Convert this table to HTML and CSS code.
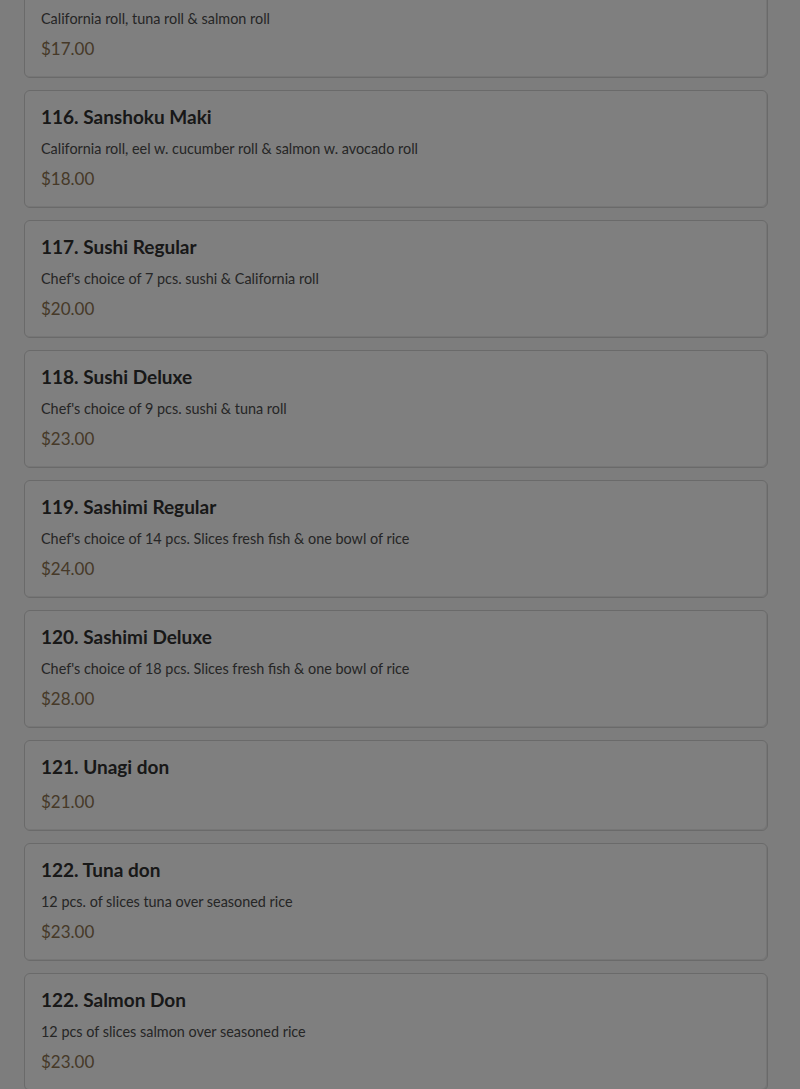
FILE: index.html
```html
<!DOCTYPE html>
<html lang="en">
<head>
<meta charset="utf-8">
<title>Menu</title>
<link rel="stylesheet" href="styles.css">
</head>
<body>
<main class="menu">
  <section class="item">
    <h3 class="item-title">115. Maki Combo</h3>
    <p class="item-desc">California roll, tuna roll &amp; salmon roll</p>
    <div class="item-price">$17.00</div>
  </section>
  <section class="item">
    <h3 class="item-title">116. Sanshoku Maki</h3>
    <p class="item-desc">California roll, eel w. cucumber roll &amp; salmon w. avocado roll</p>
    <div class="item-price">$18.00</div>
  </section>
  <section class="item">
    <h3 class="item-title">117. Sushi Regular</h3>
    <p class="item-desc">Chef's choice of 7 pcs. sushi &amp; California roll</p>
    <div class="item-price">$20.00</div>
  </section>
  <section class="item">
    <h3 class="item-title">118. Sushi Deluxe</h3>
    <p class="item-desc">Chef's choice of 9 pcs. sushi &amp; tuna roll</p>
    <div class="item-price">$23.00</div>
  </section>
  <section class="item">
    <h3 class="item-title">119. Sashimi Regular</h3>
    <p class="item-desc">Chef's choice of 14 pcs. Slices fresh fish &amp; one bowl of rice</p>
    <div class="item-price">$24.00</div>
  </section>
  <section class="item">
    <h3 class="item-title">120. Sashimi Deluxe</h3>
    <p class="item-desc">Chef's choice of 18 pcs. Slices fresh fish &amp; one bowl of rice</p>
    <div class="item-price">$28.00</div>
  </section>
  <section class="item">
    <h3 class="item-title">121. Unagi don</h3>
    <div class="item-price">$21.00</div>
  </section>
  <section class="item">
    <h3 class="item-title">122. Tuna don</h3>
    <p class="item-desc">12 pcs. of slices tuna over seasoned rice</p>
    <div class="item-price">$23.00</div>
  </section>
  <section class="item">
    <h3 class="item-title">122. Salmon Don</h3>
    <p class="item-desc">12 pcs of slices salmon over seasoned rice</p>
    <div class="item-price">$23.00</div>
  </section>
</main>
<div class="backdrop"></div>
</body>
</html>
```
FILE: styles.css
```css
html, body {
  margin: 0;
  padding: 0;
  background: #fafafa;
  height: 100%;
  overflow: hidden;
}
body {
  font-family: Lato, "Noto Sans", sans-serif;
  color: #333;
}
.menu {
  display: flex;
  flex-direction: column;
  gap: 12px;
  padding: 0 32px 0 24px;
  margin-top: -40px;
}
.item {
  background: #fefefe;
  border: 1px solid #d4d4d4;
  border-radius: 6px;
  padding: 16px;
  display: flex;
  flex-direction: column;
  box-shadow: inset -1px -1px 0 #ededed;
}
.item-title {
  margin: 0 0 12px;
  font-size: 19px;
  line-height: 20px;
  font-weight: 700;
  color: #303030;
}
.item-desc {
  margin: 0 0 7px;
  font-size: 14.4px;
  line-height: 20px;
  color: #4c4c4c;
}
.item-price {
  font-size: 17px;
  line-height: 25px;
  color: #8c7350;
}
.backdrop {
  position: fixed;
  inset: 0;
  background: rgba(0, 0, 0, 0.5);
}
```
